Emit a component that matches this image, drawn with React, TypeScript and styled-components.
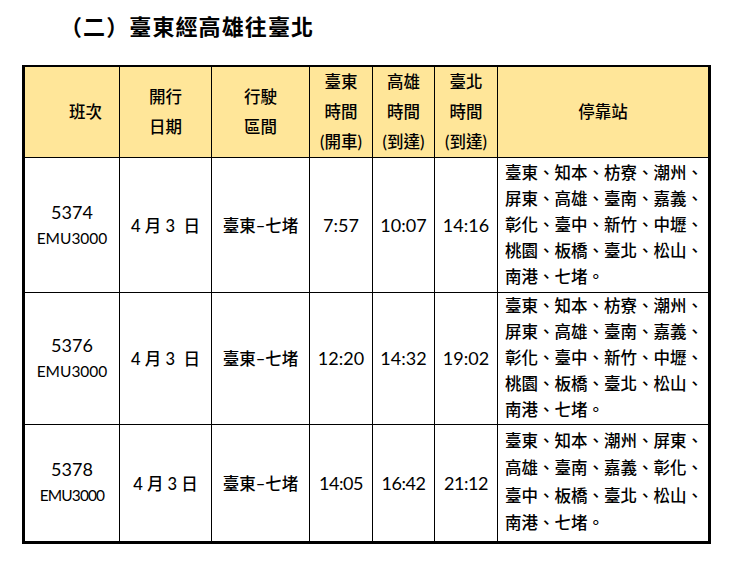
import React from 'react';
import styled, { createGlobalStyle } from 'styled-components';

const Global = createGlobalStyle`
  html, body { margin: 0; padding: 0; background: #fff; }
  body {
    font-family: "Lato", "Noto Sans CJK TC", sans-serif;
    color: #000;
  }
`;

const Page = styled.div`
  width: 731px;
  height: 565px;
  box-sizing: border-box;
  padding-left: 22px;
`;

const Title = styled.h2`
  margin: 0 0 15px 38px;
  font-family: "Noto Sans CJK TC", sans-serif;
  font-weight: 700;
  font-size: 22px;
  line-height: 50px;
  letter-spacing: 1.1px;
`;

const Table = styled.table`
  border-collapse: collapse;
  table-layout: fixed;
  width: 689px;
  border: 3px solid #000;
  border-top-width: 2px;
`;

const HeadRow = styled.tr`
  height: 89.5px;
`;

const HeadCell = styled.th<{ $padLeft?: number }>`
  background: #ffe699;
  border: 1px solid #000;
  font-weight: 500;
  font-size: 16.5px;
  line-height: 30px;
  text-align: center;
  vertical-align: middle;
  padding: 0 0 0 ${(p) => p.$padLeft ?? 0}px;
`;

const BodyRow = styled.tr<{ $h: number }>`
  height: ${(p) => p.$h}px;
`;

const Cell = styled.td`
  border: 1px solid #000;
  text-align: center;
  vertical-align: middle;
  padding: 0;
  font-weight: 500;
  font-size: 16.5px;
  white-space: nowrap;
`;

const TrainNo = styled.div`
  font-size: 18px;
  line-height: 26px;
  font-weight: 400;
`;

const Emu = styled.div<{ $tight?: boolean }>`
  font-size: 15.5px;
  line-height: 27px;
  font-weight: 400;
  letter-spacing: ${(p) => (p.$tight ? '-0.9px' : '0')};
`;

const TimeCell = styled(Cell)<{ $tight?: boolean }>`
  font-size: 18px;
  font-weight: 400;
  letter-spacing: ${(p) => (p.$tight ? '-0.5px' : '0')};
`;

const StopsCell = styled(Cell)`
  text-align: left;
  padding-left: 7px;
`;

const StopLine = styled.div<{ $lh: number }>`
  line-height: ${(p) => p.$lh}px;
`;

type Row = {
  no: string;
  date: string;
  route: string;
  t1: string;
  t2: string;
  t3: string;
  stops: string[];
  h: number;
  lh: number;
  tight?: boolean;
};

const stopsA = [
  '臺東、知本、枋寮、潮州、',
  '屏東、高雄、臺南、嘉義、',
  '彰化、臺中、新竹、中壢、',
  '桃園、板橋、臺北、松山、',
  '南港、七堵。',
];

const rows: Row[] = [
  { no: '5374', date: '4 月 3\u00a0 日', route: '臺東–七堵', t1: '7:57', t2: '10:07', t3: '14:16', stops: stopsA, h: 135, lh: 26 },
  { no: '5376', date: '4 月 3\u00a0 日', route: '臺東–七堵', t1: '12:20', t2: '14:32', t3: '19:02', stops: stopsA, h: 131.5, lh: 26 },
  {
    no: '5378',
    date: '4 月 3 日',
    route: '臺東–七堵',
    t1: '14:05',
    t2: '16:42',
    t3: '21:12',
    stops: ['臺東、知本、潮州、屏東、', '高雄、臺南、嘉義、彰化、', '臺中、板橋、臺北、松山、', '南港、七堵。'],
    h: 118,
    lh: 27.5,
    tight: true,
  },
];

export default function App() {
  return (
    <>
      <Global />
      <Page>
        <Title>（二）臺東經高雄往臺北</Title>
        <Table>
          <colgroup>
            <col style={{ width: 96 }} />
            <col style={{ width: 92 }} />
            <col style={{ width: 98 }} />
            <col style={{ width: 63 }} />
            <col style={{ width: 62 }} />
            <col style={{ width: 63 }} />
            <col />
          </colgroup>
          <thead>
            <HeadRow>
              <HeadCell $padLeft={27}>班次</HeadCell>
              <HeadCell>
                開行
                <br />
                日期
              </HeadCell>
              <HeadCell>
                行駛
                <br />
                區間
              </HeadCell>
              <HeadCell>
                臺東
                <br />
                時間
                <br />
                (開車)
              </HeadCell>
              <HeadCell>
                高雄
                <br />
                時間
                <br />
                (到達)
              </HeadCell>
              <HeadCell>
                臺北
                <br />
                時間
                <br />
                (到達)
              </HeadCell>
              <HeadCell>停靠站</HeadCell>
            </HeadRow>
          </thead>
          <tbody>
            {rows.map((r) => (
              <BodyRow key={r.no} $h={r.h}>
                <Cell>
                  <TrainNo>{r.no}</TrainNo>
                  <Emu $tight={r.tight}>EMU3000</Emu>
                </Cell>
                <Cell>{r.date}</Cell>
                <Cell>{r.route}</Cell>
                <TimeCell $tight={r.tight}>{r.t1}</TimeCell>
                <TimeCell $tight={r.tight}>{r.t2}</TimeCell>
                <TimeCell $tight={r.tight}>{r.t3}</TimeCell>
                <StopsCell>
                  {r.stops.map((s) => (
                    <StopLine key={s} $lh={r.lh}>
                      {s}
                    </StopLine>
                  ))}
                </StopsCell>
              </BodyRow>
            ))}
          </tbody>
        </Table>
      </Page>
    </>
  );
}
